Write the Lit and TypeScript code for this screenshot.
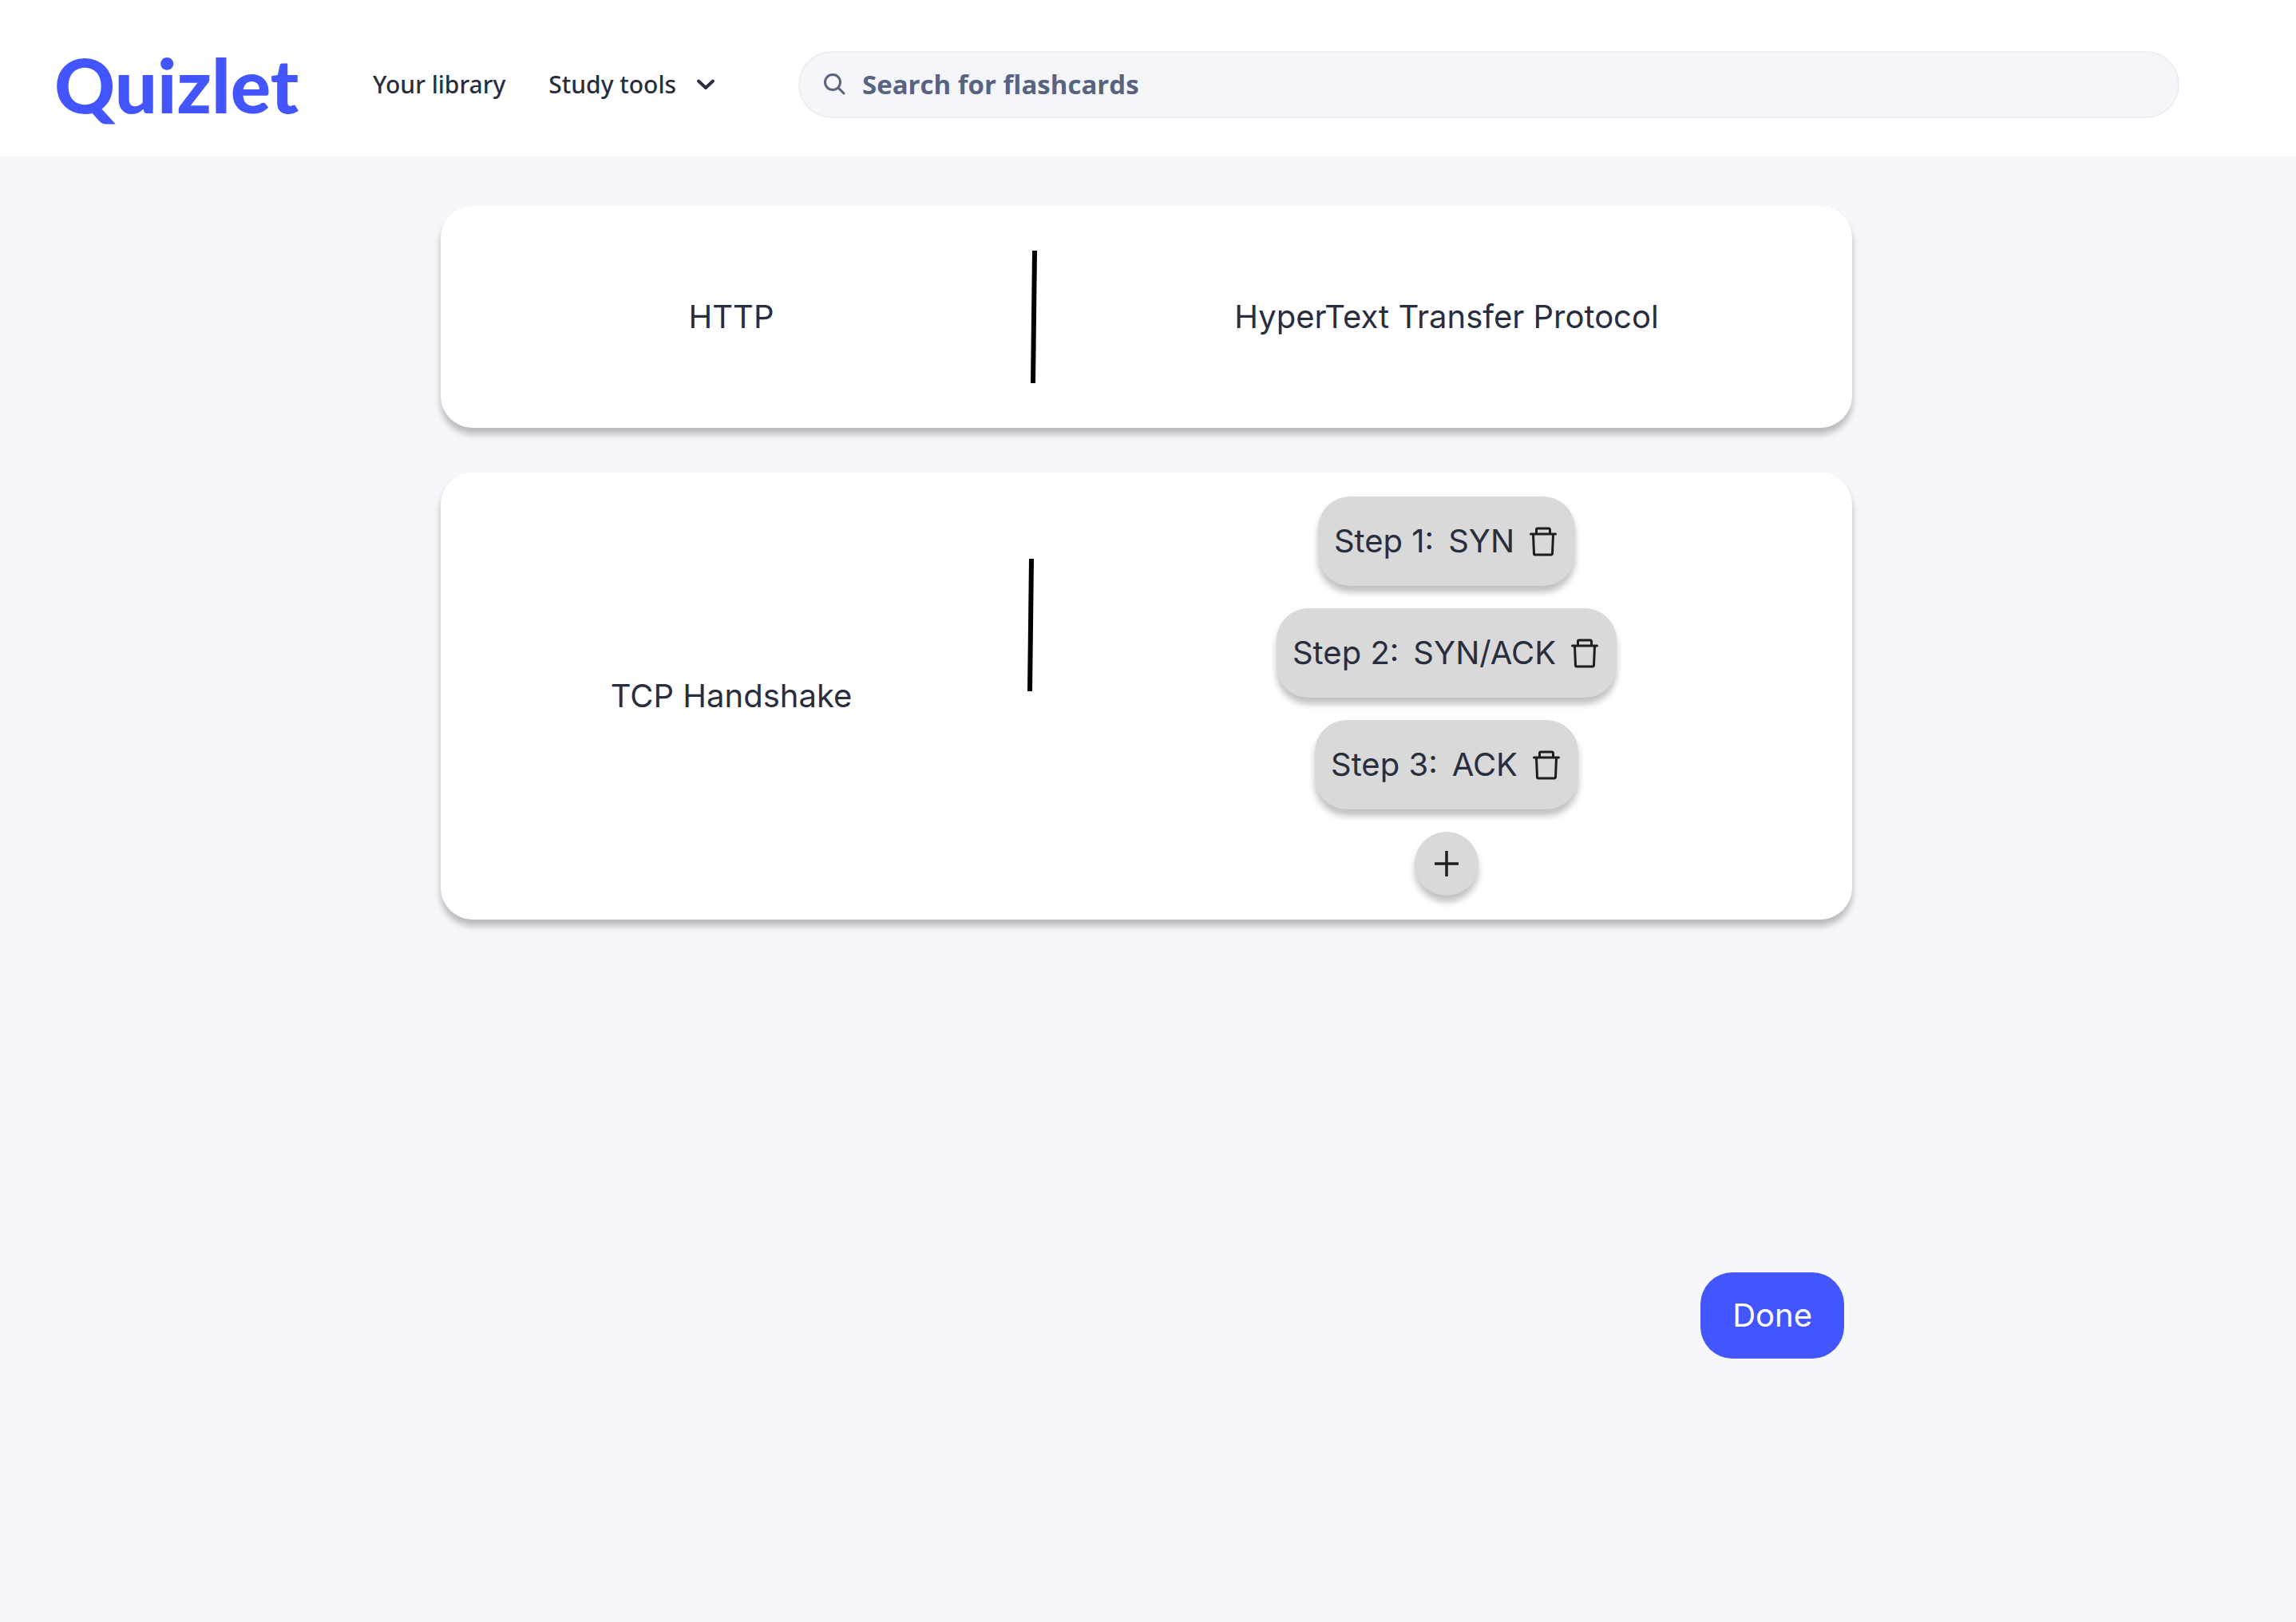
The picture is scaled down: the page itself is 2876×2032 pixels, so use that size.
import { LitElement, html, css, svg } from "lit";
import { customElement, property, state } from "lit/decorators.js";

interface Step {
  id: number;
  text: string;
}

@customElement("site-header")
export class SiteHeader extends LitElement {
  static styles = css`
    :host {
      display: block;
    }
    .bar {
      box-sizing: border-box;
      display: flex;
      align-items: center;
      height: 196px;
      padding: 64px 146px 48px 68px;
      background: #ffffff;
      color: #282e3e;
      font-family: "Noto Sans", sans-serif;
    }
    .logo {
      width: 316px;
      color: #4255ff;
      font: 900 94px/84px Lato, sans-serif;
      text-decoration: none;
    }
    .nav {
      display: flex;
      align-items: center;
      gap: 54px;
      width: 533px;
      margin-left: 83px;
    }
    .link {
      display: flex;
      align-items: center;
      gap: 26px;
      padding: 0;
      border: 0;
      background: none;
      color: inherit;
      font: 500 30px/40px "Noto Sans", sans-serif;
      text-decoration: none;
      white-space: nowrap;
    }
    .chevron {
      width: 22px;
      height: 14px;
    }
    .search {
      box-sizing: border-box;
      display: flex;
      flex: 1;
      align-items: center;
      gap: 20px;
      height: 84px;
      padding: 0 30px;
      border: 2px solid #ededf4;
      border-radius: 42px;
      background: #f4f6fa;
      color: #586380;
    }
    .glass {
      width: 28px;
      height: 28px;
    }
    .field {
      flex: 1;
      min-width: 0;
      padding: 0;
      border: 0;
      outline: 0;
      background: none;
      color: inherit;
      font: 700 33px/40px "Open Sans", sans-serif;
    }
    .field::placeholder {
      color: inherit;
      opacity: 1;
    }
  `;

  render() {
    return html`
      <header class="bar">
        <a class="logo" href="#">Quizlet</a>
        <nav class="nav">
          <a class="link" href="#library">Your library</a>
          <button class="link" type="button">
            Study tools
            <svg class="chevron" viewBox="0 0 22 14" fill="none" stroke="currentColor" stroke-width="4" stroke-linecap="round" stroke-linejoin="round" aria-hidden="true">
              <path d="M2 2.5l9 8.5 9-8.5" />
            </svg>
          </button>
        </nav>
        <label class="search">
          <svg class="glass" viewBox="0 0 28 28" fill="none" stroke="currentColor" stroke-width="3" stroke-linecap="round" aria-hidden="true">
            <circle cx="11" cy="11" r="9.500" />
            <path d="M18 18l7 7" />
          </svg>
          <input class="field" type="search" aria-label="Search" placeholder="Search for flashcards" />
        </label>
      </header>
    `;
  }
}

@customElement("flash-card")
export class FlashCard extends LitElement {
  @property() term = "";
  @property() divider: "middle" | "upper" = "middle";

  static styles = css`
    :host {
      display: grid;
      grid-template-columns: 728fr 24px 1016fr;
      align-items: center;
      box-sizing: border-box;
      min-height: 278px;
      padding: 30px 0;
      border-radius: 40px;
      background: #ffffff;
      box-shadow: 0 8px 8px rgba(0, 0, 0, 0.25);
    }
    .term {
      text-align: center;
    }
    .divider {
      width: 24px;
      height: 166px;
    }
    .upper {
      align-self: start;
      margin-top: 78px;
    }
    .definition {
      display: flex;
      flex-direction: column;
      align-items: center;
      gap: 28px;
    }
  `;

  render() {
    const upper = this.divider === "upper";
    const top = upper ? 12 : 16;
    return html`
      <div class="term">${this.term}</div>
      <svg class="divider ${upper ? "upper" : ""}" viewBox="0 0 24 166" aria-hidden="true">
        ${svg`<path d="M${top} 0L${top - 2} 166" stroke="#000" stroke-width="6" />`}
      </svg>
      <div class="definition"><slot></slot></div>
    `;
  }
}

@customElement("app-root")
export class AppRoot extends LitElement {
  @state() private steps: Step[] = [
    { id: 1, text: "SYN" },
    { id: 2, text: "SYN/ACK" },
    { id: 3, text: "ACK" },
  ];

  static styles = css`
    :host {
      display: flex;
      flex-direction: column;
      min-height: 100vh;
      background: #f6f7fb;
      color: #282e3e;
      font: 400 40px/48px Inter, sans-serif;
    }
    .page {
      box-sizing: border-box;
      display: flex;
      flex: 1;
      flex-direction: column;
      gap: 56px;
      width: 100%;
      max-width: 1772px;
      margin: 0 auto;
      padding: 62px 4px 330px 0;
    }
    .step {
      box-sizing: border-box;
      display: flex;
      align-items: center;
      gap: 18px;
      height: 112px;
      padding: 0 22px 0 20px;
      border-radius: 40px;
      background: #d9d9d9;
      box-shadow: 0 8px 8px rgba(0, 0, 0, 0.25);
    }
    .remove {
      display: flex;
      padding: 0;
      border: 0;
      background: none;
      color: #1e1e1e;
    }
    .trash {
      width: 36px;
      height: 38px;
    }
    .add {
      display: flex;
      align-items: center;
      justify-content: center;
      width: 80px;
      height: 80px;
      padding: 0;
      border: 0;
      border-radius: 50%;
      background: #d9d9d9;
      color: #1e1e1e;
      box-shadow: 0 8px 8px rgba(0, 0, 0, 0.25);
    }
    .plus {
      width: 32px;
      height: 32px;
    }
    .done {
      align-self: flex-end;
      height: 108px;
      margin: auto 10px 0 0;
      padding: 0 40px;
      border: 0;
      border-radius: 40px;
      background: #4255ff;
      color: #ffffff;
      font: inherit;
    }
  `;

  private remove(id: number) {
    this.steps = this.steps.filter((step) => step.id !== id);
  }

  private add() {
    const id = Math.max(0, ...this.steps.map((step) => step.id)) + 1;
    this.steps = [...this.steps, { id, text: "" }];
  }

  render() {
    return html`
      <site-header></site-header>
      <main class="page">
        <flash-card term="HTTP">HyperText Transfer Protocol</flash-card>
        <flash-card term="TCP Handshake" divider="upper">
          ${this.steps.map(
            (step, index) => html`
              <div class="step">
                <span>Step ${index + 1}:</span>
                <span>${step.text}</span>
                <button class="remove" type="button" aria-label="Delete step ${index + 1}" @click=${() => this.remove(step.id)}>
                  <svg class="trash" viewBox="0 0 36 38" fill="none" stroke="currentColor" stroke-width="3" stroke-linecap="round" stroke-linejoin="round" aria-hidden="true">
                    <path d="M2.5 10h31M9.500 9.500V4.500a1.500 1.500 0 0 1 1.500-1.500h14a1.500 1.500 0 0 1 1.500 1.500V9.500M5.500 10.500l1 24a1.500 1.500 0 0 0 1.500 1.500h20a1.500 1.500 0 0 0 1.500-1.500L30.500 10.500" />
                  </svg>
                </button>
              </div>
            `
          )}
          <button class="add" type="button" aria-label="Add step" @click=${this.add}>
            <svg class="plus" viewBox="0 0 32 32" stroke="currentColor" stroke-width="3.500" aria-hidden="true">
              <path d="M16 0v32M1 16h30" />
            </svg>
          </button>
        </flash-card>
        <button class="done" type="button">Done</button>
      </main>
    `;
  }
}
